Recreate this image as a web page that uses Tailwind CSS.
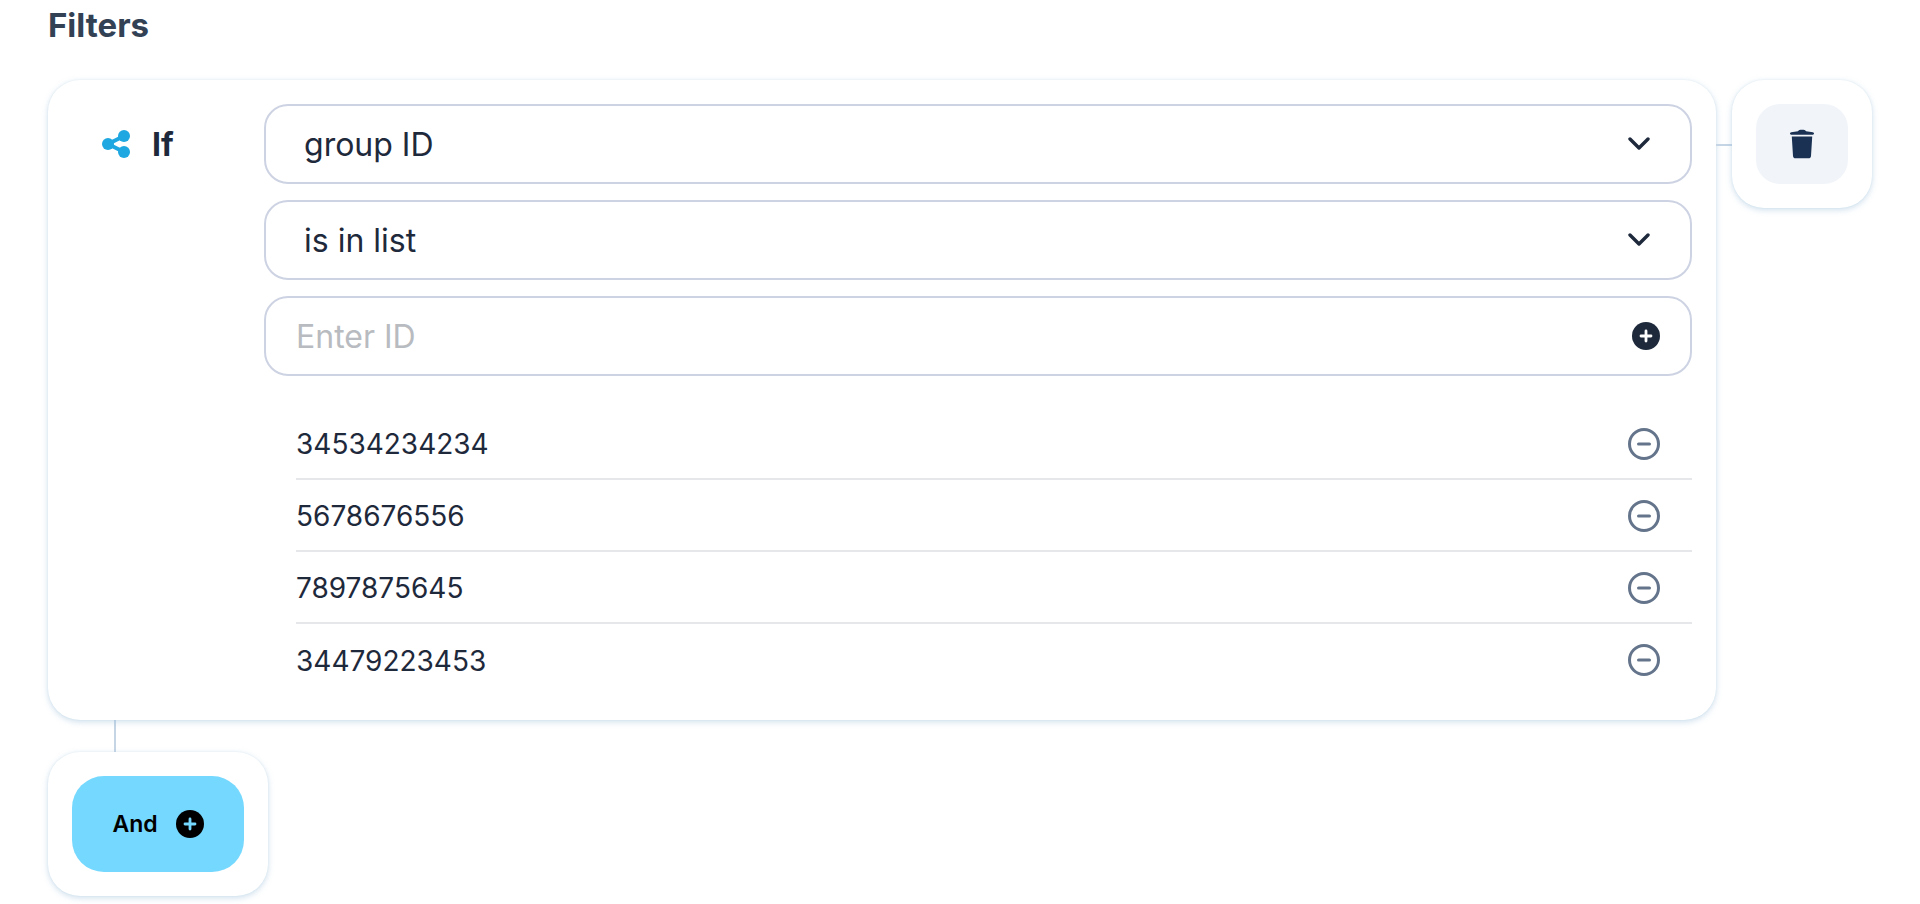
<!doctype html>
<html>
<head>
<meta charset="utf-8">
<script src="https://cdn.jsdelivr.net/npm/@tailwindcss/browser@4"></script>
</head>
<body class="bg-white font-['Inter',sans-serif] text-[#1e293b]">
<div class="h-[904px] w-[1920px] overflow-hidden pl-12">
  <h2 class="h-[50px] text-[33px] font-bold leading-[50px] text-[#334155]">Filters</h2>
  <div class="mt-[30px] flex items-start">
    <div class="flex h-[640px] w-[1668px] rounded-[32px] bg-white p-6 shadow-[0_2px_6px_rgba(148,186,214,0.45),0_0_2px_rgba(186,214,230,0.35)]">
      <div class="flex h-20 w-[192px] shrink-0 items-center pl-[30px]">
        <svg class="h-7 w-7 text-[#1ea7e0]" viewBox="0 0 28 28" fill="currentColor" stroke="currentColor" stroke-width="4"><line x1="6" y1="14" x2="22" y2="6"/><line x1="6" y1="14" x2="22" y2="22"/><circle cx="6" cy="14" r="6" stroke="none"/><circle cx="22" cy="6" r="6" stroke="none"/><circle cx="22" cy="22" r="6" stroke="none"/></svg>
        <span class="ml-[22px] pt-0.5 text-[32px] font-bold">If</span>
      </div>
      <div class="flex min-w-0 flex-1 flex-col gap-4">
        <div class="flex h-20 items-center justify-between rounded-[24px] border-2 border-[#cdd3e3] pl-[38px] pr-[40px] text-[32px]">
          <span class="pt-0.5">group ID</span>
          <svg class="h-4 w-[22px]" viewBox="0 0 22 16" fill="none" stroke="#1e293b" stroke-width="3.4" stroke-linecap="round" stroke-linejoin="round"><path d="M2 3l9 9 9-9"/></svg>
        </div>
        <div class="flex h-20 items-center justify-between rounded-[24px] border-2 border-[#cdd3e3] pl-[38px] pr-[40px] text-[32px]">
          <span class="pt-0.5">is in list</span>
          <svg class="h-4 w-[22px]" viewBox="0 0 22 16" fill="none" stroke="#1e293b" stroke-width="3.4" stroke-linecap="round" stroke-linejoin="round"><path d="M2 3l9 9 9-9"/></svg>
        </div>
        <div class="flex h-20 items-center justify-between rounded-[24px] border-2 border-[#cdd3e3] pl-[30px] pr-[30px] text-[32px]">
          <span class="pt-0.5 text-[#b8bbc0]">Enter ID</span>
          <svg class="h-7 w-7" viewBox="0 0 28 28"><circle cx="14" cy="14" r="14" fill="#1e293b"/><path d="M14 9v10M9 14h10" stroke="#fff" stroke-width="2.8" stroke-linecap="round"/></svg>
        </div>
        <div class="ml-8 mt-4 flex flex-col">
          <div class="flex h-[72px] items-center justify-between border-b-2 border-[#e5e7eb] pr-8 pt-0.5 text-[28px]">
            <span>34534234234</span>
            <svg class="h-8 w-8" viewBox="0 0 32 32" fill="none" stroke="#64748b" stroke-width="3"><circle cx="16" cy="16" r="14.5"/><path d="M10.5 16h11" stroke-linecap="round"/></svg>
          </div>
          <div class="flex h-[72px] items-center justify-between border-b-2 border-[#e5e7eb] pr-8 pt-0.5 text-[28px]">
            <span>5678676556</span>
            <svg class="h-8 w-8" viewBox="0 0 32 32" fill="none" stroke="#64748b" stroke-width="3"><circle cx="16" cy="16" r="14.5"/><path d="M10.5 16h11" stroke-linecap="round"/></svg>
          </div>
          <div class="flex h-[72px] items-center justify-between border-b-2 border-[#e5e7eb] pr-8 pt-0.5 text-[28px]">
            <span>7897875645</span>
            <svg class="h-8 w-8" viewBox="0 0 32 32" fill="none" stroke="#64748b" stroke-width="3"><circle cx="16" cy="16" r="14.5"/><path d="M10.5 16h11" stroke-linecap="round"/></svg>
          </div>
          <div class="flex h-[72px] items-center justify-between pr-8 text-[28px]">
            <span class="pt-0.5">34479223453</span>
            <svg class="h-8 w-8" viewBox="0 0 32 32" fill="none" stroke="#64748b" stroke-width="3"><circle cx="16" cy="16" r="14.5"/><path d="M10.5 16h11" stroke-linecap="round"/></svg>
          </div>
        </div>
      </div>
    </div>
    <div class="mt-[64px] h-0.5 w-4 bg-[#c5d5e6]"></div>
    <div class="rounded-[32px] bg-white p-6 shadow-[0_2px_6px_rgba(148,186,214,0.45),0_0_2px_rgba(186,214,230,0.35)]">
      <div class="flex h-20 w-[92px] items-center justify-center rounded-[24px] bg-[#f1f5f9]">
        <svg class="h-[30px] w-6" viewBox="0 0 24 30" fill="#1a3154"><path d="M8 2.200C8.600 1 10 .8 12 .8s3.400.2 4 1.400l6.800 1c.7.1 1.200.6 1.200 1.300s-.5 1.200-1.200 1.200H1.200C.5 5.700 0 5.200 0 4.500s.5-1.200 1.200-1.300z"/><path d="M1.800 7.500h20.400l-1.200 19.500c-.1 1.400-1.100 2.300-2.500 2.300H5.500c-1.400 0-2.400-.9-2.500-2.300z"/></svg>
      </div>
    </div>
  </div>
  <div class="ml-[66px] h-8 w-0.5 bg-[#c5d5e6]"></div>
  <div class="w-[220px] rounded-[32px] bg-white p-6 shadow-[0_2px_6px_rgba(148,186,214,0.45),0_0_2px_rgba(186,214,230,0.35)]">
    <div class="flex h-24 items-center justify-center gap-[18px] rounded-[32px] bg-[#75d8fe] text-[23px] font-semibold text-black">
      <span>And</span>
      <svg class="h-7 w-7" viewBox="0 0 28 28"><circle cx="14" cy="14" r="14" fill="#000"/><path d="M14 9v10M9 14h10" stroke="#75d8fe" stroke-width="2.8" stroke-linecap="round"/></svg>
    </div>
  </div>
</div>
</body>
</html>
